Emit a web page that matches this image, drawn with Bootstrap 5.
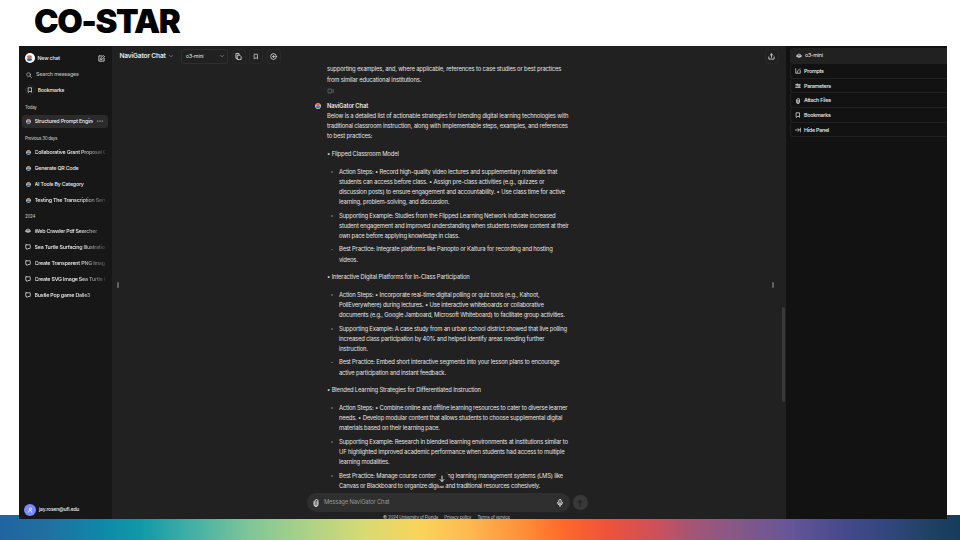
<!DOCTYPE html>
<html lang="en">
<head>
<meta charset="utf-8">
<title>CO-STAR</title>
<link href="https://cdn.jsdelivr.net/npm/bootstrap@5.3.0/dist/css/bootstrap.min.css" rel="stylesheet">
<style>
body{width:960px;height:540px;overflow:hidden;background:#fff;font-family:Inter,"Liberation Sans",sans-serif;font-size:5.86px;line-height:10.25px;letter-spacing:-.147px;color:#e6e6e6}
svg{display:block;fill:none;stroke:currentColor;stroke-width:1.8;stroke-linecap:round;stroke-linejoin:round;flex:none}
.slide{height:540px;background:linear-gradient(90deg,#2065a0 0,#2070a0 5%,#0f88a8 10.5%,#1098a8 14.5%,#42b0a5 20%,#80c698 26%,#a8d188 31.5%,#d8da72 38%,#fad45a 43.7%,#fdb850 49%,#ff8a35 55%,#ff6a2c 58.5%,#ef533a 63%,#d05058 68%,#a55575 72%,#845888 77%,#665599 82.3%,#45498c 88%,#334780 92%,#204264 96.5%,#153b5c 100%) 0 515px/960px 25px no-repeat}
.headline{height:46px;padding:0 0 0 34px;color:#000;font-size:33px;line-height:42px;font-weight:900;letter-spacing:-1.5px}
.app{width:928px;height:473px;margin-left:19px;background:#212121;overflow:hidden}
.side{width:93px;background:#171717;color:#eee;font-size:5.3px;font-weight:500;letter-spacing:-.19px}
.side-row{height:16px;padding-left:6.5px;gap:4px;white-space:nowrap}
.side-row span{width:70px;overflow:hidden}
.side-row.chat-row{padding-left:6px;gap:3.5px}
.fade-end span{-webkit-mask-image:linear-gradient(90deg,#000 62%,rgba(0,0,0,.2));mask-image:linear-gradient(90deg,#000 62%,rgba(0,0,0,.2))}
.side-label{font-size:4.4px;letter-spacing:-.25px;padding-left:6px;color:#bbb;line-height:8px}
.active-row{height:13px;margin:3px 4px 0 3px;padding-left:3.5px;padding-right:5px;background:#2b2b2b;border-radius:3px;gap:4px;white-space:nowrap}
.active-row span{width:58px;overflow:hidden}
.dial{width:10px;height:10px;border-radius:50%;background:#fff}
.chat{width:674px}
.topbar{height:20px;padding:0 7.5px 0 7.5px;color:#e8e8e8}
.tool{width:14px;height:15px;border:1px solid #282828;border-radius:3px}
.picker{width:47px;height:15px;border:1px solid #2e2e2e;border-radius:3px;padding:0 3px 0 4px;font-size:5.1px;margin-left:8px}
.brand-name{width:46px;font-size:6.6px;font-weight:600;letter-spacing:-.17px;white-space:nowrap}
.grip{width:2px;height:6px;background:#626262;border-radius:1px}
.thread{margin-left:200px;padding-left:15px;width:277px;height:427px;white-space:nowrap;overflow:hidden}
.thread p{margin:0 0 7.3px}
.thread ul{margin:0 0 7.3px;padding-left:12px;list-style:none;letter-spacing:-.175px}
.thread li{margin-bottom:3.1px;position:relative}
.thread li:last-child{margin-bottom:0}
.thread li::before{content:"";position:absolute;left:-8px;top:4.5px;width:1.5px;height:1.5px;border-radius:50%;background:#606060}
.jump{left:323px;top:425px;width:14px;height:15px;border-radius:50%;background:#212121;color:#eee}
.thumb{right:1px;top:261px;width:3px;height:95px;border-radius:2px;background:#393939}
.composer{margin-left:195px;height:19px;gap:3px}
.prompt-box{width:263px;height:19px;border-radius:10px;background:#2f2f2f;padding:0 6px 0 5px;color:#979797;font-size:5.86px;letter-spacing:-.17px}
.send{width:14.5px;height:14.5px;border-radius:50%;background:#383838;color:#1b1b1b}
.fine{margin-left:271px;padding-top:2px;font-size:4.4px;line-height:7px;letter-spacing:-.15px;color:#c4c4c4;white-space:nowrap;gap:6.3px}
.panel{width:161px;background:#121212;padding:2px 0 0 4px;color:#eee;font-weight:500;font-size:5.4px;letter-spacing:-.26px}
.panel-row{height:14.65px;border:1px solid #212121;border-top:0;border-right:0;border-radius:3px 0 0 3px;padding:1px 0 0 4px;gap:3px}
.panel-row:first-child{height:16px;background:#212121;padding:0 0 0 5px;font-weight:400}
.user-dot{width:12px;height:12px;border-radius:50%;background:#7989ff;color:#fff}
</style>
<script src="https://cdn.jsdelivr.net/npm/bootstrap@5.3.0/dist/js/bootstrap.bundle.min.js"></script>
</head>
<body>
<svg width="0" height="0" class="position-absolute">
<symbol id="logo" viewBox="0 0 16 16"><circle cx="8" cy="8" r="7.5" fill="#e9edf4" stroke="none"/><path d="M2 5.5a6 5 0 0 1 12 0z" fill="#e76a34" stroke="none"/><path d="M2 8.5h12a6 5 0 0 1-12 0z" fill="#2167b2" stroke="none"/><path d="M5 7h6" stroke="#172c58" stroke-width="1.6"/></symbol>
<symbol id="bubble" viewBox="0 0 16 16"><path d="M3 2h10q1 0 1 1v8q0 1-1 1H8l-3 3v-3H3q-1 0-1-1V3q0-1 1-1z"/></symbol>
<symbol id="mark-icon" viewBox="0 0 16 16"><path d="M4 2h8v12l-4-3-4 3z"/></symbol>
<symbol id="chev" viewBox="0 0 16 16"><path d="M3 6l5 5 5-5"/></symbol>
<symbol id="clip" viewBox="0 0 16 16"><path d="M4 5v6a4 4 0 0 0 8 0V4a3 3 0 0 0-6 0v7a2 2 0 0 0 4 0V5"/></symbol>
<symbol id="model" viewBox="0 0 16 16"><path d="M3 7q0-4 5-4t5 4v3q-5 4-10 0zM1 8h14M6 8v2M10 8v2"/></symbol>
</svg>
<main class="slide">
<h1 class="headline m-0">CO-STAR</h1>
<div class="app d-flex">
<aside class="side d-flex flex-column">
 <div class="d-flex align-items-center" style="height:16px;margin-top:4px;padding:0 7px 0 5.5px">
  <div class="dial d-flex align-items-center justify-content-center"><svg width="7" height="7"><use href="#logo"/></svg></div><span class="me-auto" style="margin-left:3px">New chat</span>
  <svg width="7" height="7" viewBox="0 0 16 16"><path d="M8 2H2v12h12V8M6 10l1-4 5-5 3 3-5 5z"/></svg></div>
 <div class="side-row d-flex align-items-center" style="padding-left:7px;height:17px;color:#bdbdbd;letter-spacing:-.15px"><svg width="6" height="6" viewBox="0 0 16 16"><circle cx="7" cy="7" r="5"/><path d="M11 11l4 4"/></svg><span>Search messages</span></div>
 <div class="side-row d-flex align-items-center" style="height:14px;padding-left:5.5px;gap:3px"><div class="rounded-circle d-flex align-items-center justify-content-center" style="width:10px;height:10px;border:1px solid #292929"><svg width="6" height="6"><use href="#mark-icon"/></svg></div><span>Bookmarks</span></div>
 <div class="side-label" style="margin-top:6.7px">Today</div>
 <div class="active-row d-flex align-items-center"><svg width="5" height="5"><use href="#logo"/></svg><span>Structured Prompt Engine</span><svg class="ms-auto" width="6" height="6" viewBox="0 0 16 16"><path d="M2 8h.1M8 8h.1M14 8h.1" stroke-width="3"/></svg></div>
 <div class="side-label" style="margin-top:7px">Previous 30 days</div>
 <div class="side-row fade-end d-flex align-items-center" style="margin-top:1.6px"><svg width="5" height="5"><use href="#logo"/></svg><span>Collaborative Grant Proposal C</span></div>
 <div class="side-row d-flex align-items-center"><svg width="5" height="5"><use href="#logo"/></svg><span>Generate QR Code</span></div>
 <div class="side-row d-flex align-items-center"><svg width="5" height="5"><use href="#logo"/></svg><span>AI Tools By Category</span></div>
 <div class="side-row fade-end d-flex align-items-center"><svg width="5" height="5"><use href="#logo"/></svg><span>Testing The Transcription Serv</span></div>
 <div class="side-label" style="margin-top:5.2px">2024</div>
 <div style="margin-top:1.8px" class="fade-end">
  <div class="side-row chat-row d-flex align-items-center"><svg width="6" height="6"><use href="#model"/></svg><span>Web Crawler Pdf Searcher</span></div>
  <div class="side-row chat-row d-flex align-items-center"><svg width="6" height="6"><use href="#bubble"/></svg><span>Sea Turtle Surfacing Illustration</span></div>
  <div class="side-row chat-row d-flex align-items-center"><svg width="6" height="6"><use href="#bubble"/></svg><span>Create Transparent PNG Image</span></div>
  <div class="side-row chat-row d-flex align-items-center"><svg width="6" height="6"><use href="#bubble"/></svg><span>Create SVG Image Sea Turtle C</span></div>
  <div class="side-row chat-row d-flex align-items-center"><svg width="6" height="6"><use href="#bubble"/></svg><span>Bustle Pop game Dalle3</span></div>
 </div>
 <div class="mt-auto d-flex align-items-center" style="padding:0 0 3.5px 5px;gap:3px"><div class="user-dot d-flex align-items-center justify-content-center"><svg width="6" height="6" viewBox="0 0 16 16"><circle cx="9" cy="5" r="3"/><path d="M3 14q1-5 5-5t5 5"/></svg></div><span style="font-size:5px">jay.rosen@ufl.edu</span></div>
</aside>
<section class="chat position-relative">
 <div class="topbar d-flex align-items-center">
  <span class="brand-name">NaviGator Chat</span><svg width="4" height="4" style="margin-left:3.5px"><use href="#chev"/></svg>
  <div class="picker d-flex align-items-center justify-content-between"><span>o3-mini</span><svg width="4" height="4"><use href="#chev"/></svg></div>
  <div class="d-flex" style="margin-left:3.5px;gap:3.5px">
  <div class="tool d-flex align-items-center justify-content-center"><svg width="7" height="7" viewBox="0 0 16 16"><path d="M5 12H2V1h7v3M6 5h5l3 3v7H6z"/></svg></div>
  <div class="tool d-flex align-items-center justify-content-center"><svg width="6" height="7"><use href="#mark-icon"/></svg></div>
  <div class="tool d-flex align-items-center justify-content-center"><svg width="7" height="7" viewBox="0 0 16 16"><circle cx="8" cy="8" r="6.5"/><path d="M6 8h4M8 6v4"/></svg></div></div>
  <div class="tool d-flex align-items-center justify-content-center ms-auto"><svg width="7" height="7" viewBox="0 0 16 16"><path d="M8 10V2M5 5l3-3 3 3M2 9v5h12V9"/></svg></div>
 </div>
 <div class="thread">
  <p class="m-0" style="margin-top:-1.6px!important">supporting examples, and, where applicable, references to case studies or best practices<br>from similar educational institutions.</p>
  <div class="d-flex align-items-center" style="height:13px;color:#777"><svg width="8" height="6" viewBox="0 0 20 16"><path d="M3 3h9v10H3zM16 4v8"/></svg></div>
  <div class="d-flex align-items-center" style="margin:4px 0 0 -12px;height:9px;gap:6px"><svg width="6" height="6"><use href="#logo"/></svg><span class="fw-semibold">NaviGator Chat</span></div>
  <p>Below is a detailed list of actionable strategies for blending digital learning technologies with<br>traditional classroom instruction, along with implementable steps, examples, and references<br>to best practices:</p>
  <p>• Flipped Classroom Model</p>
  <ul><li>Action Steps: • Record high-quality video lectures and supplementary materials that<br>students can access before class. • Assign pre-class activities (e.g., quizzes or<br>discussion posts) to ensure engagement and accountability. • Use class time for active<br>learning, problem-solving, and discussion.</li>
  <li>Supporting Example: Studies from the Flipped Learning Network indicate increased<br>student engagement and improved understanding when students review content at their<br>own pace before applying knowledge in class.</li>
  <li>Best Practice: Integrate platforms like Panopto or Kaltura for recording and hosting<br>videos.</li></ul>
  <p>• Interactive Digital Platforms for In-Class Participation</p>
  <ul><li>Action Steps: • Incorporate real-time digital polling or quiz tools (e.g., Kahoot,<br>PollEverywhere) during lectures. • Use interactive whiteboards or collaborative<br>documents (e.g., Google Jamboard, Microsoft Whiteboard) to facilitate group activities.</li>
  <li>Supporting Example: A case study from an urban school district showed that live polling<br>increased class participation by 40% and helped identify areas needing further<br>instruction.</li>
  <li>Best Practice: Embed short interactive segments into your lesson plans to encourage<br>active participation and instant feedback.</li></ul>
  <p>• Blended Learning Strategies for Differentiated Instruction</p>
  <ul><li>Action Steps: • Combine online and offline learning resources to cater to diverse learner<br>needs. • Develop modular content that allows students to choose supplemental digital<br>materials based on their learning pace.</li>
  <li>Supporting Example: Research in blended learning environments at institutions similar to<br>UF highlighted improved academic performance when students had access to multiple<br>learning modalities.</li>
  <li>Best Practice: Manage course content using learning management systems (LMS) like<br>Canvas or Blackboard to organize digital and traditional resources cohesively.</li></ul>
 </div>
 <div class="composer d-flex align-items-center">
  <div class="prompt-box d-flex align-items-center"><svg width="8" height="8" style="color:#eee"><use href="#clip"/></svg><span style="margin-left:4px">Message NaviGator Chat</span><svg class="ms-auto" width="8" height="8" viewBox="0 0 16 16" style="color:#eee"><rect x="5.5" y="1" width="5" height="8" rx="2.5"/><path d="M3 7q0 5 5 5t5-5M8 12v3"/></svg></div>
  <div class="send d-flex align-items-center justify-content-center"><svg width="8" height="8" viewBox="0 0 16 16"><path d="M8 14V3M4 7l4-4 4 4"/></svg></div>
 </div>
 <div class="fine d-flex"><span>© 2024 University of Florida</span><span>Privacy policy</span><span>Terms of service</span></div>
 <div class="jump position-absolute d-flex align-items-center justify-content-center"><svg width="8" height="8" viewBox="0 0 16 16"><path d="M8 2v11M4 9l4 4 4-4"/></svg></div>
 <div class="grip position-absolute" style="left:5px;top:236px"></div>
 <div class="grip position-absolute" style="left:660px;top:236px"></div>
 <div class="thumb position-absolute"></div>
</section>
<aside class="panel">
 <div class="panel-row d-flex align-items-center"><svg width="6" height="6"><use href="#model"/></svg><span>o3-mini</span></div>
 <div class="panel-row d-flex align-items-center"><svg width="6" height="6" viewBox="0 0 16 16"><path d="M2 2v12h12V6M6 12l2-5 5-5"/></svg><span>Prompts</span></div>
 <div class="panel-row d-flex align-items-center"><svg width="6" height="6" viewBox="0 0 16 16"><path d="M2 4h12M6 2v4M2 8h12M11 6v4M2 12h12"/></svg><span>Parameters</span></div>
 <div class="panel-row d-flex align-items-center"><svg width="6" height="6"><use href="#clip"/></svg><span>Attach Files</span></div>
 <div class="panel-row d-flex align-items-center"><svg width="6" height="6"><use href="#mark-icon"/></svg><span>Bookmarks</span></div>
 <div class="panel-row d-flex align-items-center"><svg width="6" height="6" viewBox="0 0 16 16"><path d="M1 8h10M8 4l4 4-4 4M15 3v10"/></svg><span>Hide Panel</span></div>
</aside>
</div>
</main>
</body>
</html>
